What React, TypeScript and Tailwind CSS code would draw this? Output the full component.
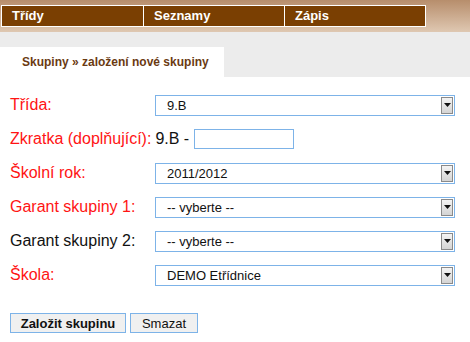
import React from 'react'

const font = { fontFamily: '"Liberation Sans", Arial, sans-serif' }

function Arrow() {
  return (
    <div className="w-[12px] h-[17px] my-auto mr-[1px] border border-[#8a8a8a] bg-gradient-to-b from-[#f4f4f4] to-[#d4d4d4] flex items-center justify-center">
      <svg width="7" height="4" viewBox="0 0 7 4">
        <path d="M0 0h7L3.5 4z" fill="#111" />
      </svg>
    </div>
  )
}

function FakeSelect({ value }: { value: string }) {
  return (
    <div className="w-[300px] h-[21px] border border-[#7db3e8] bg-white flex items-center">
      <span className="flex-1 pl-[11px] text-[13px] text-[#111] leading-none">{value}</span>
      <Arrow />
    </div>
  )
}

export default function App() {
  const nav = ['Třídy', 'Seznamy', 'Zápis']

  const rows = [
    { label: 'Třída:', red: true, value: '9.B' },
    { label: 'Zkratka (doplňující):', red: true, input: true },
    { label: 'Školní rok:', red: true, value: '2011/2012' },
    { label: 'Garant skupiny 1:', red: true, value: '-- vyberte --' },
    { label: 'Garant skupiny 2:', red: false, value: '-- vyberte --' },
    { label: 'Škola:', red: true, value: 'DEMO Etřídnice' },
  ]

  return (
    <div className="w-[470px] h-[342px] bg-white overflow-hidden" style={font}>
      {/* header */}
      <div className="h-[32px] bg-gradient-to-b from-[#b78e6c] to-[#dfc8b2] pt-[5px] pl-[1px]">
        <div className="flex w-[425px] h-[22px] border border-white bg-[#7a3f02]">
          {nav.map((n, i) => (
            <div
              key={n}
              className={`w-[141px] flex items-center pl-[10px] text-[13px] font-bold text-white ${i > 0 ? 'border-l border-white' : ''}`}
            >
              {n}
            </div>
          ))}
        </div>
      </div>

      {/* tabs */}
      <div className="bg-[#ececec] pt-[15px]">
        <div className="w-[224px] h-[30px] bg-white flex items-center pl-[22px] text-[12px] font-bold text-[#6a3a12]">
          Skupiny » založení nové skupiny
        </div>
      </div>

      {/* form */}
      <div className="pt-[18px] px-[10px] flex flex-col gap-[14px]">
        {rows.map((r) => (
          <div key={r.label} className="flex items-center h-[20px] text-[16px]">
            {r.input ? (
              <>
                <span className="text-[#ff1414] whitespace-nowrap">{r.label}</span>
                <span className="ml-[4px] text-[#111]">9.B -</span>
                <div className="ml-[5px] w-[100px] h-[20px] border border-[#7db3e8] bg-white" />
              </>
            ) : (
              <>
                <span className={`w-[145px] ${r.red ? 'text-[#ff1414]' : 'text-[#111]'}`}>{r.label}</span>
                <FakeSelect value={r.value!} />
              </>
            )}
          </div>
        ))}

        <div className="flex gap-[4px] mt-[14px]">
          <button className="w-[116px] h-[20px] border border-[#7db3e8] bg-[#f0f0f0] text-[13px] font-bold text-[#111] leading-none">
            Založit skupinu
          </button>
          <button className="w-[68px] h-[20px] border border-[#7db3e8] bg-[#f0f0f0] text-[13px] text-[#111] leading-none">
            Smazat
          </button>
        </div>
      </div>
    </div>
  )
}
